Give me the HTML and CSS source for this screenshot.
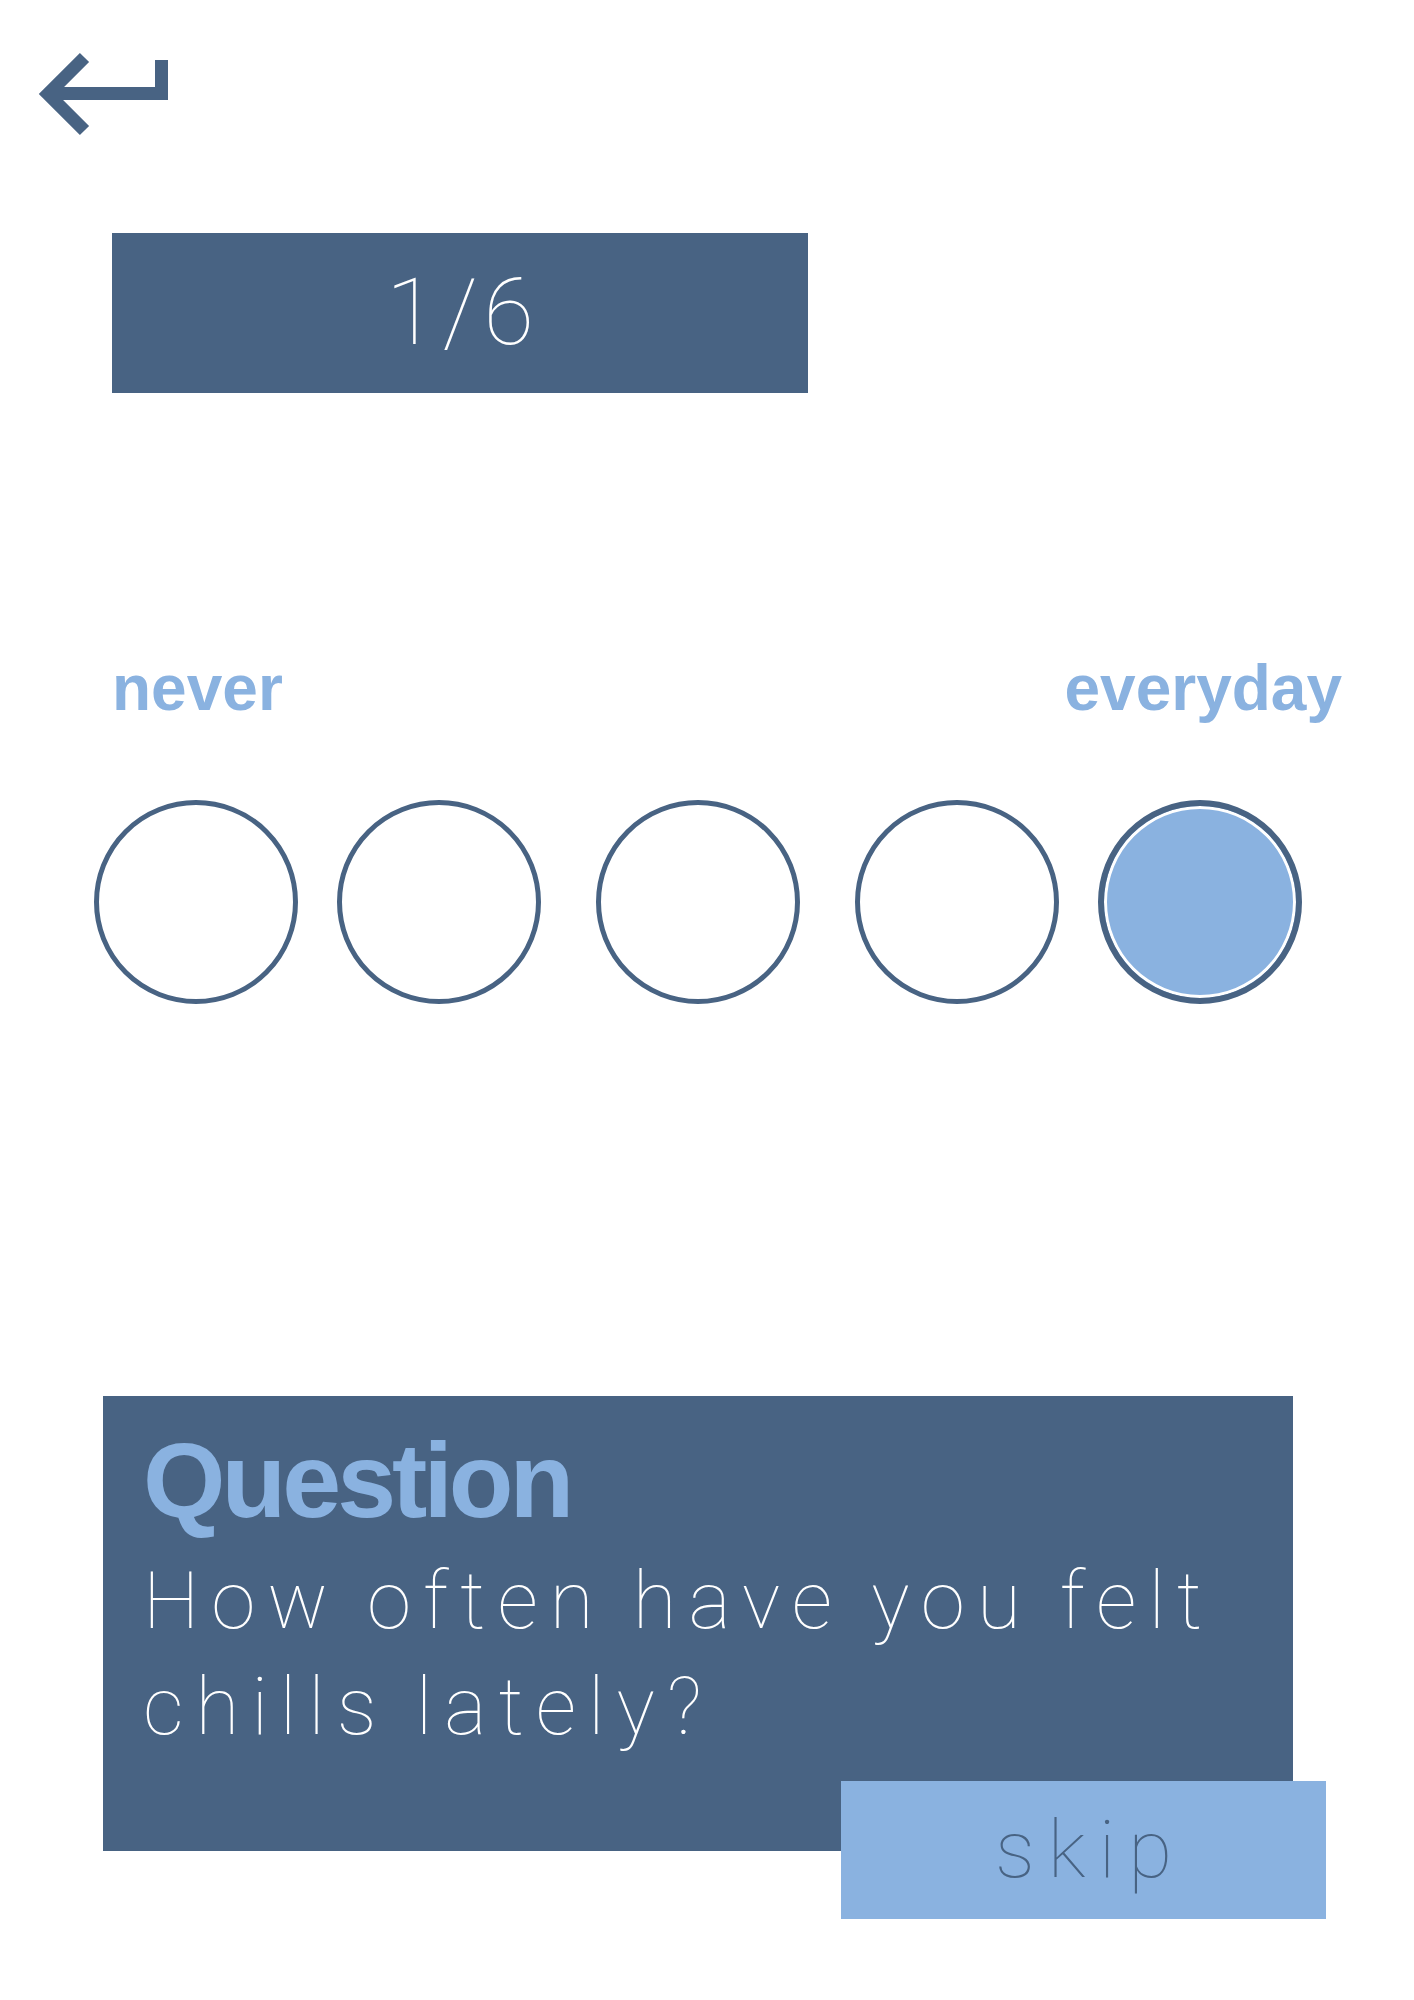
FILE: index.html
```html
<!DOCTYPE html>
<html lang="en">
<head>
<meta charset="utf-8">
<title>Question 1/6</title>
<link rel="stylesheet" href="styles.css">
</head>
<body>
<main class="page">
  <a class="back" href="#" aria-label="Back">
    <svg class="back-icon" width="180" height="140" viewBox="0 0 180 140" aria-hidden="true">
      <polyline points="84.5,57.5 48,94 84.5,130.5" fill="none" stroke="#486383" stroke-width="13" stroke-linejoin="miter" stroke-miterlimit="4"/>
      <path d="M161.5 60 V93.5 H50" fill="none" stroke="#486383" stroke-width="13" stroke-linejoin="miter"/>
    </svg>
  </a>

  <div class="progress">1/6</div>

  <div class="scale-labels">
    <span class="scale-label">never</span>
    <span class="scale-label">everyday</span>
  </div>

  <div class="options">
    <button class="option opt-1" aria-label="1"></button>
    <button class="option opt-2" aria-label="2"></button>
    <button class="option opt-3" aria-label="3"></button>
    <button class="option opt-4" aria-label="4"></button>
    <button class="option opt-5 selected" aria-label="5"></button>
  </div>

  <section class="card">
    <h2 class="card-title">Question</h2>
    <p class="card-text">How often have you felt chills lately?</p>
    <button class="skip">skip</button>
  </section>
</main>
</body>
</html>
```

FILE: styles.css
```css
* { box-sizing: border-box; }

html, body {
  margin: 0;
  padding: 0;
  background: #ffffff;
}

.page {
  width: 1414px;
  min-height: 2000px;
  display: flex;
  flex-direction: column;
  align-items: flex-start;
}

.back {
  display: block;
  width: 180px;
  height: 140px;
}

.back-icon {
  display: block;
}

.progress {
  margin: 93px 0 0 112px;
  width: 696px;
  height: 160px;
  background: #486383;
  color: #ffffff;
  font-family: "Roboto", "Lato", "Liberation Sans", sans-serif;
  font-weight: 100;
  font-size: 92px;
  line-height: 160px;
  letter-spacing: 6px;
  text-indent: 6px;
  text-align: center;
}

.scale-labels {
  margin: 263px 0 0 112px;
  width: 1230px;
  display: flex;
  justify-content: space-between;
}

.scale-label {
  font-family: "Liberation Sans", Arial, sans-serif;
  font-weight: 700;
  font-size: 64px;
  line-height: 64px;
  color: #8ab2e0;
}

.options {
  margin: 80px 0 0 94px;
  display: flex;
}

.option {
  width: 204px;
  height: 204px;
  border-radius: 50%;
  border: 5px solid #486383;
  background: #ffffff;
  padding: 0;
  margin: 0;
  cursor: pointer;
}

.opt-2 { margin-left: 39px; }
.opt-3 { margin-left: 55px; }
.opt-4 { margin-left: 55px; }
.opt-5 {
  margin-left: 39px;
  border-width: 6px;
}

.option.selected {
  background: #8ab2e0;
  box-shadow: inset 0 0 0 3px #ffffff;
}

.card {
  position: relative;
  margin: 392px 0 0 103px;
  width: 1190px;
  height: 455px;
  background: #486383;
  padding: 31px 40px 0 40px;
}

.card-title {
  margin: 0;
  font-family: "Liberation Sans", Arial, sans-serif;
  font-weight: 700;
  font-size: 106px;
  line-height: 106px;
  letter-spacing: -4px;
  color: #8ab2e0;
}

.card-text {
  margin: 15px 0 0 0;
  max-width: 1140px;
  font-family: "Roboto", "Lato", "Liberation Sans", sans-serif;
  font-weight: 100;
  font-size: 80px;
  line-height: 106px;
  letter-spacing: 12px;
  word-spacing: -4px;
  color: #ffffff;
}

.skip {
  position: absolute;
  left: 738px;
  top: 385px;
  width: 485px;
  height: 138px;
  border: 0;
  margin: 0;
  padding: 0;
  background: #8ab2e0;
  color: #486383;
  font-family: "Roboto", "Lato", "Liberation Sans", sans-serif;
  font-weight: 100;
  font-size: 80px;
  line-height: 138px;
  letter-spacing: 13px;
  text-indent: 13px;
  text-align: center;
  cursor: pointer;
}
```
